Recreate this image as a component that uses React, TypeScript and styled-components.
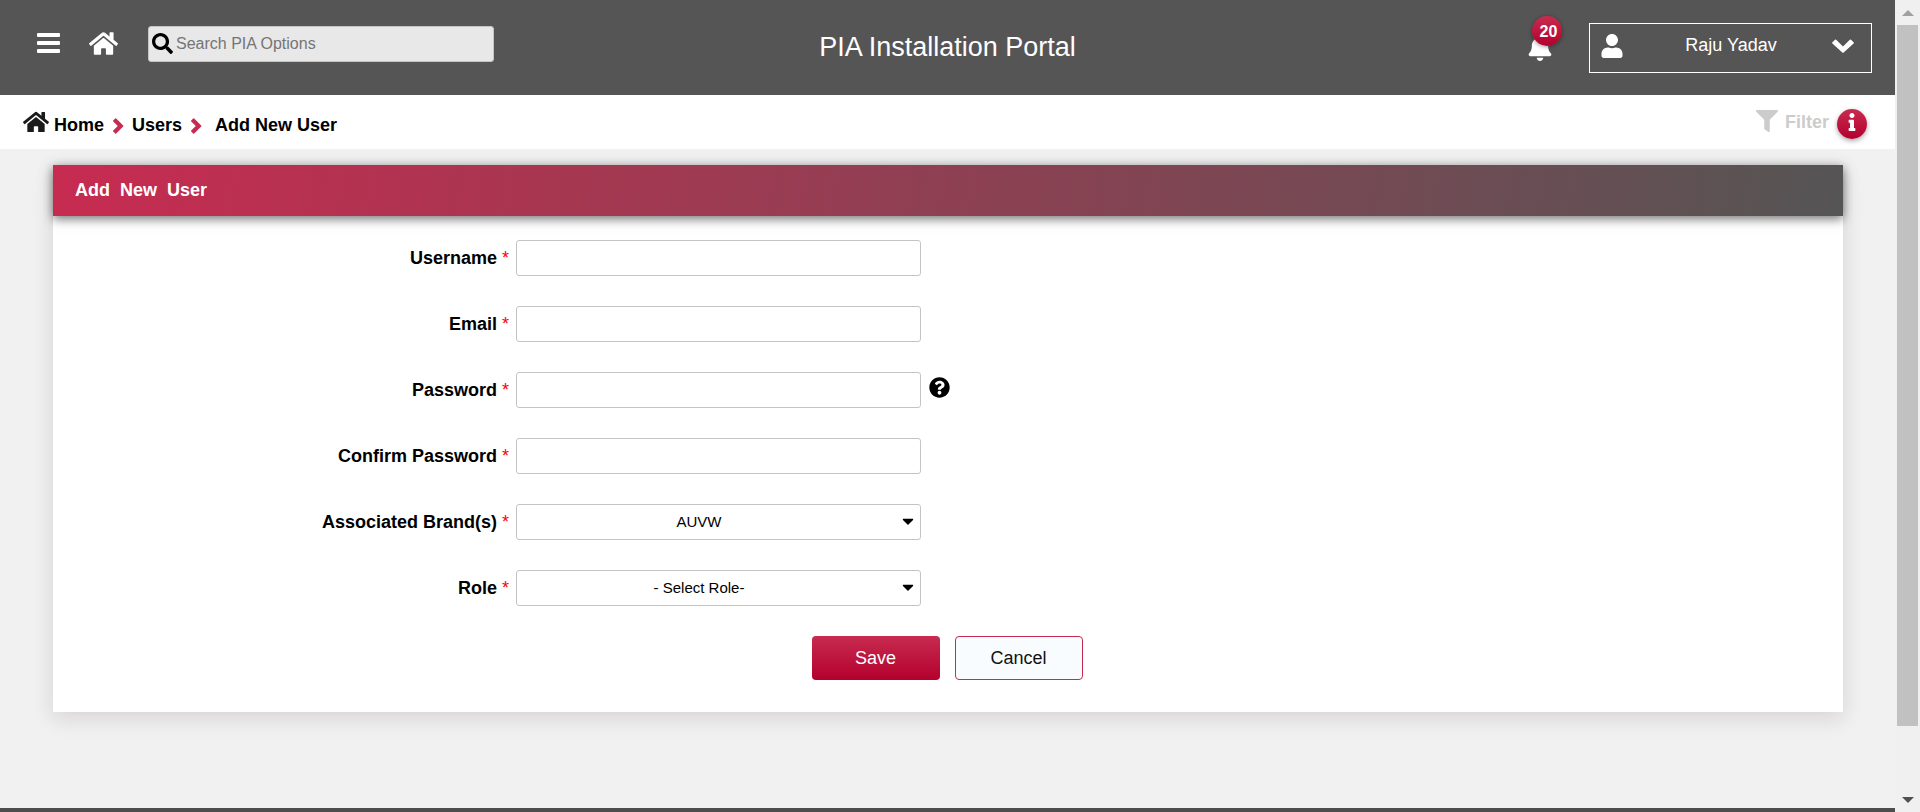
import React from "react";
import styled, { createGlobalStyle } from "styled-components";
import {
  FaBell,
  FaCaretDown,
  FaFilter,
  FaHome,
  FaInfo,
  FaQuestionCircle,
  FaSearch,
  FaUser,
} from "react-icons/fa";

const GlobalStyle = createGlobalStyle`
  *, *::before, *::after { box-sizing: border-box; }
  body {
    margin: 0;
    background: #f1f1f1;
    color: #000;
    font-family: "Liberation Sans", Arial, sans-serif;
    font-size: 18px;
  }
  button, input, select { font-family: inherit; }
  svg { display: block; flex: none; }
`;

const crimson = "linear-gradient(#c72b50, #b4002d)";

const Shell = styled.div`
  display: flex;
  height: 100vh;
`;

const Page = styled.div`
  flex: 1;
  min-width: 0;
  display: flex;
  flex-direction: column;
`;

const Header = styled.header`
  display: grid;
  grid-template-columns: 1fr auto 1fr;
  align-items: center;
  height: 95px;
  padding: 0 23px 0 37px;
  background: #555;
  color: #fff;
`;

const HeaderLeft = styled.div`
  display: flex;
  align-items: center;
  gap: 29px;
  padding-bottom: 8px;
`;

const HeaderRight = styled.div`
  display: flex;
  align-items: center;
  justify-content: flex-end;
  gap: 36px;
`;

const IconButton = styled.button`
  position: relative;
  padding: 0;
  border: 0;
  background: none;
  color: inherit;
  cursor: pointer;
`;

const SearchBox = styled.label`
  display: flex;
  align-items: center;
  width: 346px;
  height: 36px;
  margin-left: 1px;
  padding: 0 3px;
  border: 1px solid #c4c4c4;
  border-radius: 3px;
  background: #e8e8e8;
  color: #000;
`;

const SearchInput = styled.input`
  flex: 1;
  min-width: 0;
  padding: 0 3px;
  border: 0;
  outline: 0;
  background: transparent;
  font-size: 16px;
  line-height: 20px;
  &::placeholder { color: #757575; }
`;

const PortalTitle = styled.h1`
  margin: 0;
  padding: 0 14px 2px 0;
  font-size: 27px;
  line-height: 32px;
  font-weight: 400;
`;

const Badge = styled.span`
  position: absolute;
  top: -19px;
  left: 5px;
  width: 30px;
  height: 30px;
  border-radius: 50%;
  background: ${crimson};
  box-shadow: 0 1px 4px rgba(0, 0, 0, 0.4);
  font-size: 16px;
  line-height: 32px;
  font-weight: 700;
  text-indent: 3px;
`;

const UserButton = styled.button`
  display: flex;
  align-items: center;
  width: 283px;
  height: 50px;
  padding: 0 17px 4px 10px;
  border: 1px solid #fff;
  background: transparent;
  color: #fff;
  font-size: 18px;
  cursor: pointer;
`;

const UserName = styled.span`
  flex: 1;
  padding-left: 6px;
`;

const SubBar = styled.div`
  display: flex;
  align-items: center;
  justify-content: space-between;
  height: 54px;
  padding: 0 28px 0 23px;
  background: #fff;
`;

const Crumbs = styled.nav`
  display: flex;
  align-items: center;
  gap: 8px;
  padding-top: 5px;
  font-weight: 700;
  line-height: 20px;
`;

const Crumb = styled.a<{ $last?: boolean }>`
  display: flex;
  align-items: center;
  gap: 5px;
  padding-left: ${(p) => (p.$last ? "5px" : "0")};
  color: #000;
  text-decoration: none;
`;

const CrumbHome = styled.span`
  padding-bottom: 5px;
  color: #1a1a1a;
`;

const CrumbArrow = styled.span`
  padding-top: 2px;
  color: #c72b50;
`;

const SubActions = styled.div`
  display: flex;
  align-items: center;
  gap: 8px;
`;

const FilterButton = styled.button`
  display: flex;
  align-items: center;
  gap: 7px;
  padding: 0;
  border: 0;
  background: none;
  color: #ccc;
  font-size: 18px;
  line-height: 20px;
  font-weight: 700;
  & > svg { margin-bottom: 3px; }
`;

const InfoButton = styled.button`
  display: flex;
  justify-content: center;
  width: 30px;
  height: 30px;
  margin-top: 4px;
  padding: 4px 0 0;
  border: 0;
  border-radius: 50%;
  background: ${crimson};
  box-shadow: 0 2px 5px rgba(0, 0, 0, 0.35);
  color: #fff;
  cursor: pointer;
`;

const Main = styled.main`
  flex: 1;
  padding: 16px 52px 0 53px;
`;

const Card = styled.section`
  background: #fff;
  box-shadow: 0 6px 20px rgba(60, 30, 30, 0.14);
`;

const CardTitle = styled.h2`
  margin: 0;
  padding: 15px 22px 16px;
  background: linear-gradient(100deg, #c72b50, #555);
  box-shadow: 0 3px 10px rgba(0, 0, 0, 0.55);
  color: #fff;
  font-size: 18px;
  line-height: 20px;
  white-space: pre;
`;

const Form = styled.form`
  display: flex;
  flex-direction: column;
  gap: 30px;
  padding: 24px 31px 32px;
`;

const Row = styled.div`
  display: grid;
  grid-template-columns: 25% minmax(0, 405px) auto;
  justify-content: start;
`;

const Label = styled.label`
  padding-right: 7px;
  font-weight: 700;
  line-height: 36px;
  text-align: right;
`;

const Required = styled.span`
  color: #f00;
  font-weight: 400;
`;

const TextInput = styled.input`
  width: 100%;
  height: 36px;
  padding: 0 8px;
  border: 1px solid #c4c4c4;
  border-radius: 3px;
  background: #fff;
  font-size: 15px;
`;

const SelectBox = styled.div`
  display: grid;
  align-items: center;
  & > * { grid-area: 1 / 1; }
  & > svg {
    justify-self: end;
    margin: 0 4px 2px 0;
    pointer-events: none;
  }
`;

const Select = styled.select`
  appearance: none;
  width: 100%;
  height: 36px;
  padding: 0 39px 2px 0;
  border: 1px solid #c4c4c4;
  border-radius: 3px;
  background: #fff;
  color: #000;
  font-size: 15px;
  text-align: center;
  text-align-last: center;
`;

const HelpButton = styled(IconButton)`
  align-self: start;
  padding: 5px 8px;
`;

const Actions = styled.div`
  display: flex;
  justify-content: center;
  gap: 15px;
  padding-right: 2px;
`;

const ActionButton = styled.button<{ $primary?: boolean }>`
  width: 128px;
  height: 44px;
  border: 1px solid ${(p) => (p.$primary ? "transparent" : "#c72b50")};
  border-radius: 4px;
  background: ${(p) => (p.$primary ? crimson : "#f8fcff")};
  background-origin: border-box;
  color: ${(p) => (p.$primary ? "#fff" : "#111")};
  font-size: 18px;
  cursor: pointer;
`;

const Footer = styled.footer`
  height: 4px;
  background: #4d4d4d;
`;

const ScrollRail = styled.div`
  display: flex;
  flex-direction: column;
  align-items: center;
  width: 25px;
  background: #f0f0f0;
`;

const ScrollArrow = styled.div<{ $down?: boolean }>`
  display: flex;
  align-items: center;
  height: 25px;
  color: ${(p) => (p.$down ? "#505050" : "#a0a0a0")};
`;

const ScrollTrack = styled.div`
  flex: 1;
  width: 21px;
`;

const ScrollThumb = styled.div`
  height: 92%;
  background: #c1c1c1;
`;

const textFields = [
  { id: "username", label: "Username", type: "text" },
  { id: "email", label: "Email", type: "email" },
  { id: "password", label: "Password", type: "password", help: true },
  { id: "confirm", label: "Confirm Password", type: "password" },
];

const selectFields = [
  { id: "brands", label: "Associated Brand(s)", value: "AUVW" },
  { id: "role", label: "Role", value: "- Select Role-" },
];

function FieldLabel({ id, text }: { id: string; text: string }) {
  return (
    <Label htmlFor={id}>
      {text} <Required>*</Required>
    </Label>
  );
}

function CrumbChevron() {
  return (
    <CrumbArrow>
      <svg width="12" height="16" viewBox="0 0 12 16" fill="currentColor">
        <path d="M1.2 2.6 3.2.5q.5-.4 1 0l7 7q.4.5 0 1l-7 7q-.5.4-1 0l-2-2.1q-.4-.5 0-1L5.8 8 1.2 3.600q-.4-.5 0-1z" />
      </svg>
    </CrumbArrow>
  );
}

export default function App() {
  return (
    <Shell>
      <GlobalStyle />
      <Page>
        <Header>
          <HeaderLeft>
            <IconButton aria-label="Menu">
              <svg width="23" height="26" viewBox="0 0 23 26" fill="currentColor">
                <rect y="2" width="23" height="4" rx="1" />
                <rect y="10" width="23" height="4" rx="1" />
                <rect y="18" width="23" height="4" rx="1" />
              </svg>
            </IconButton>
            <IconButton aria-label="Home">
              <FaHome size={29} />
            </IconButton>
            <SearchBox>
              <FaSearch size={21} />
              <SearchInput type="search" aria-label="Search PIA Options" placeholder="Search PIA Options" />
            </SearchBox>
          </HeaderLeft>
          <PortalTitle>PIA Installation Portal</PortalTitle>
          <HeaderRight>
            <IconButton aria-label="Notifications">
              <FaBell size={26} />
              <Badge>20</Badge>
            </IconButton>
            <UserButton>
              <FaUser size={24} />
              <UserName>Raju Yadav</UserName>
              <svg width="22" height="14" viewBox="0 0 22 14" fill="currentColor">
                <path d="M.4 3.300 3 .7q.6-.5 1.200 0L11 7.500 17.800.7q.6-.5 1.200 0l2.600 2.600q.5.600 0 1.200l-9.900 8.900q-.7.600-1.400 0L.4 4.500q-.5-.6 0-1.200z" />
              </svg>
            </UserButton>
          </HeaderRight>
        </Header>

        <SubBar>
          <Crumbs aria-label="Breadcrumb">
            <Crumb href="#home">
              <CrumbHome>
                <FaHome size={26} />
              </CrumbHome>
              Home
            </Crumb>
            <CrumbChevron />
            <Crumb href="#users">Users</Crumb>
            <CrumbChevron />
            <Crumb href="#add" $last>
              Add New User
            </Crumb>
          </Crumbs>
          <SubActions>
            <FilterButton disabled>
              <FaFilter size={22} />
              Filter
            </FilterButton>
            <InfoButton aria-label="Information">
              <FaInfo size={18} />
            </InfoButton>
          </SubActions>
        </SubBar>

        <Main>
          <Card>
            <CardTitle>{"Add  New  User"}</CardTitle>
            <Form onSubmit={(e) => e.preventDefault()}>
              {textFields.map((f) => (
                <Row key={f.id}>
                  <FieldLabel id={f.id} text={f.label} />
                  <TextInput id={f.id} type={f.type} />
                  {f.help && (
                    <HelpButton type="button" aria-label="Password help">
                      <FaQuestionCircle size={21} />
                    </HelpButton>
                  )}
                </Row>
              ))}
              {selectFields.map((f) => (
                <Row key={f.id}>
                  <FieldLabel id={f.id} text={f.label} />
                  <SelectBox>
                    <Select id={f.id}>
                      <option>{f.value}</option>
                    </Select>
                    <FaCaretDown size={18} />
                  </SelectBox>
                </Row>
              ))}
              <Actions>
                <ActionButton type="submit" $primary>
                  Save
                </ActionButton>
                <ActionButton type="button">Cancel</ActionButton>
              </Actions>
            </Form>
          </Card>
        </Main>
        <Footer />
      </Page>

      <ScrollRail aria-hidden="true">
        <ScrollArrow>
          <svg width="12" height="6" viewBox="0 0 12 6" fill="currentColor">
            <path d="M6 0l6 6H0z" />
          </svg>
        </ScrollArrow>
        <ScrollTrack>
          <ScrollThumb />
        </ScrollTrack>
        <ScrollArrow $down>
          <svg width="12" height="6" viewBox="0 0 12 6" fill="currentColor">
            <path d="M0 0h12L6 6z" />
          </svg>
        </ScrollArrow>
      </ScrollRail>
    </Shell>
  );
}
